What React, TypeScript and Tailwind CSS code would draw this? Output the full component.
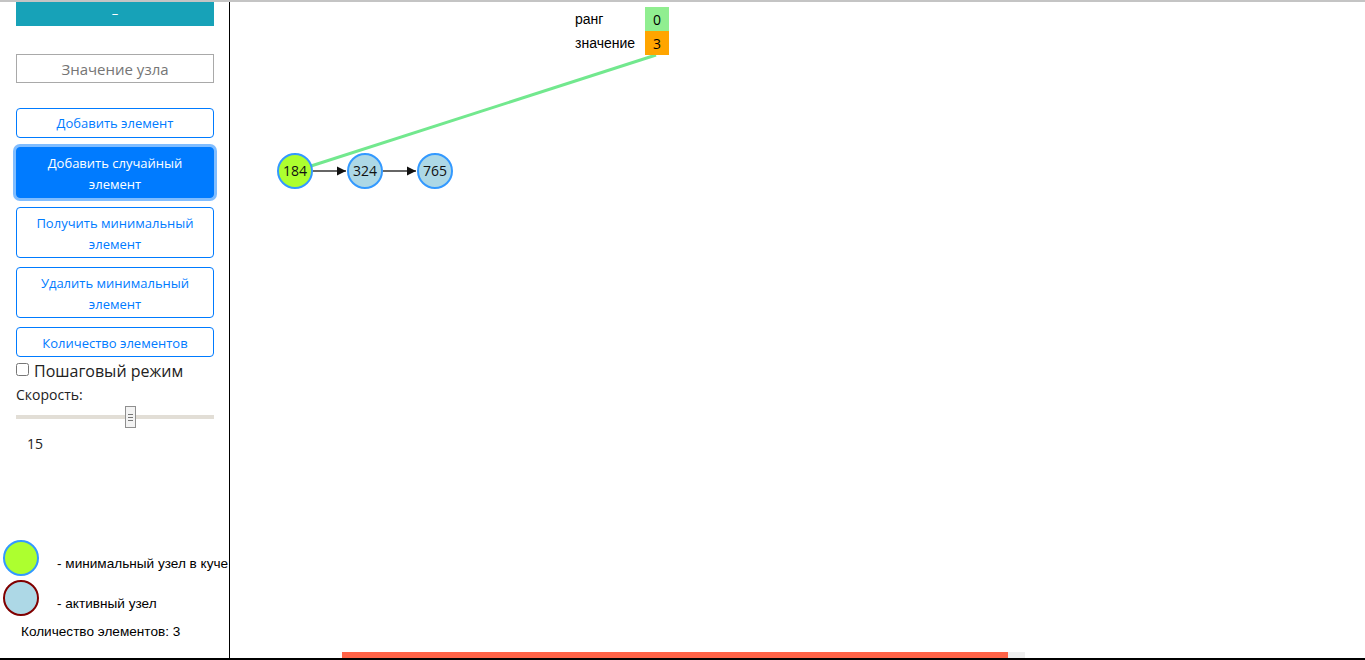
import { useState } from 'react'

const sans = { fontFamily: '"Open Sans", "Noto Sans", sans-serif' }
const arial = { fontFamily: '"Liberation Sans", Arial, sans-serif' }

const nodes = [
  { x: 295, y: 171, v: 184, min: true },
  { x: 365, y: 171, v: 324, min: false },
  { x: 435, y: 171, v: 765, min: false }
]

const OutlineButton = ({ children, h }: { children: React.ReactNode; h: string }) => (
  <button
    className={`w-full ${h} mt-[9px] pt-[2px] rounded border border-[#007bff] text-[#007bff] bg-white text-[13px] leading-[21px] px-3 text-center`}
    style={sans}
  >
    {children}
  </button>
)

const Graph = () => (
  <svg className="absolute inset-0" width="1135" height="650">
    <defs>
      <marker id="arr" markerWidth="8" markerHeight="8" refX="7" refY="4" orient="auto">
        <path d="M0,0.5 L7,4 L0,7.5 Z" fill="#111" />
      </marker>
    </defs>
    <g transform="translate(-230,-2)">
      <line x1="313" y1="171" x2="346" y2="171" stroke="#333" strokeWidth="1.3" markerEnd="url(#arr)" />
      <line x1="383" y1="171" x2="416" y2="171" stroke="#333" strokeWidth="1.3" markerEnd="url(#arr)" />
      <line x1="311" y1="166" x2="656" y2="55" stroke="#72e88e" strokeWidth="3" />
      {nodes.map((n) => (
        <g key={n.v}>
          <circle cx={n.x} cy={n.y} r="17" fill={n.min ? '#adff2f' : '#add8e6'} stroke="#3399ff" strokeWidth="2" />
          <text x={n.x} y={n.y + 5} textAnchor="middle" fontSize="14" fill="#111" style={sans}>
            {n.v}
          </text>
        </g>
      ))}
    </g>
  </svg>
)

export default function App() {
  const [step, setStep] = useState(false)

  return (
    <div className="w-[1365px] h-[660px] flex flex-col bg-white border-t-2 border-[#c4c4c4] overflow-hidden">
      <div className="flex flex-1 min-h-0">
        <aside className="w-[230px] border-r border-black flex flex-col">
          <div className="pl-4 pr-[15px]">
            <div className="h-6 bg-[#17a2b8] text-white text-[13px] flex items-center justify-center" style={sans}>
              –
            </div>
            <input
              placeholder="Значение узла"
              className="mt-7 w-full h-[29px] border border-[#a9a9a9] text-center text-[15px] placeholder-[#757575] outline-none"
              style={sans}
            />
            <button
              className="w-full h-[30px] mt-[25px] pt-[2px] rounded border border-[#007bff] text-[#007bff] bg-white text-[13px]"
              style={sans}
            >
              Добавить элемент
            </button>
            <button
              className="w-full h-[51px] mt-[9px] pt-[2px] rounded border border-[#007bff] bg-[#007bff] text-white text-[13px] leading-[21px] ring-[3px] ring-[#80bdff] px-3"
              style={sans}
            >
              Добавить случайный элемент
            </button>
            <OutlineButton h="h-[51px]">Получить минимальный элемент</OutlineButton>
            <OutlineButton h="h-[51px]">Удалить минимальный элемент</OutlineButton>
            <OutlineButton h="h-[30px]">Количество элементов</OutlineButton>
            <label className="flex items-center mt-[4px] h-5 text-[16px] text-[#222]" style={sans}>
              <input
                type="checkbox"
                checked={step}
                onChange={() => setStep(!step)}
                className="w-[13px] h-[13px] mr-[5px] -mt-[3px]"
              />
              Пошаговый режим
            </label>
            <div className="mt-[3px] text-[14px] text-[#222]" style={sans}>
              Скорость:
            </div>
            <div className="relative h-[24px] flex items-center">
              <div className="w-full h-[4px] bg-[#e2ded6]" />
              <div className="absolute left-[109px] top-[1px] w-[11px] h-[22px] bg-[#f3f3f3] border border-[#8f8f8f] flex flex-col items-center justify-center gap-[2px]">
                <div className="w-[5px] h-px bg-[#777]" />
                <div className="w-[5px] h-px bg-[#777]" />
                <div className="w-[5px] h-px bg-[#777]" />
              </div>
            </div>
            <div className="mt-[4px] pl-[11px] text-[14px] text-[#222]" style={sans}>
              15
            </div>
          </div>
          <div className="mt-auto pl-[3px] pb-[16px]" style={arial}>
            <div className="flex items-start">
              <div className="w-9 h-9 shrink-0 rounded-full bg-[#adff2f] border-2 border-[#3399ff]" />
              <span className="ml-[18px] mt-[14px] text-[13.6px] text-black whitespace-nowrap">- минимальный узел в куче</span>
            </div>
            <div className="flex items-start mt-1">
              <div className="w-9 h-9 shrink-0 rounded-full bg-[#add8e6] border-2 border-[#800000]" />
              <span className="ml-[18px] mt-[14px] text-[13.6px] text-black">- активный узел</span>
            </div>
            <div className="ml-[18px] mt-[6px] text-[13.6px] text-black">Количество элементов: 3</div>
          </div>
        </aside>
        <main className="flex-1 flex flex-col">
          <div className="relative flex-1">
            <Graph />
            <div className="absolute left-[345px] top-[5px]" style={arial}>
              <div className="flex items-center h-6">
                <span className="w-[70px] text-[14px] text-black">ранг</span>
                <span className="w-6 h-6 bg-[#90ee90] flex items-center justify-center text-[14px]" style={sans}>
                  0
                </span>
              </div>
              <div className="flex items-center h-6">
                <span className="w-[70px] text-[14px] text-black">значение</span>
                <span className="w-6 h-6 bg-[#ffa500] flex items-center justify-center text-[14px]" style={sans}>
                  3
                </span>
              </div>
            </div>
          </div>
          <div className="flex h-[6px] ml-[112px]">
            <div className="w-[666px] bg-[#ff6347]" />
            <div className="w-[17px] bg-[#efefef]" />
          </div>
        </main>
      </div>
      <div className="h-[2px] bg-black" />
    </div>
  )
}
